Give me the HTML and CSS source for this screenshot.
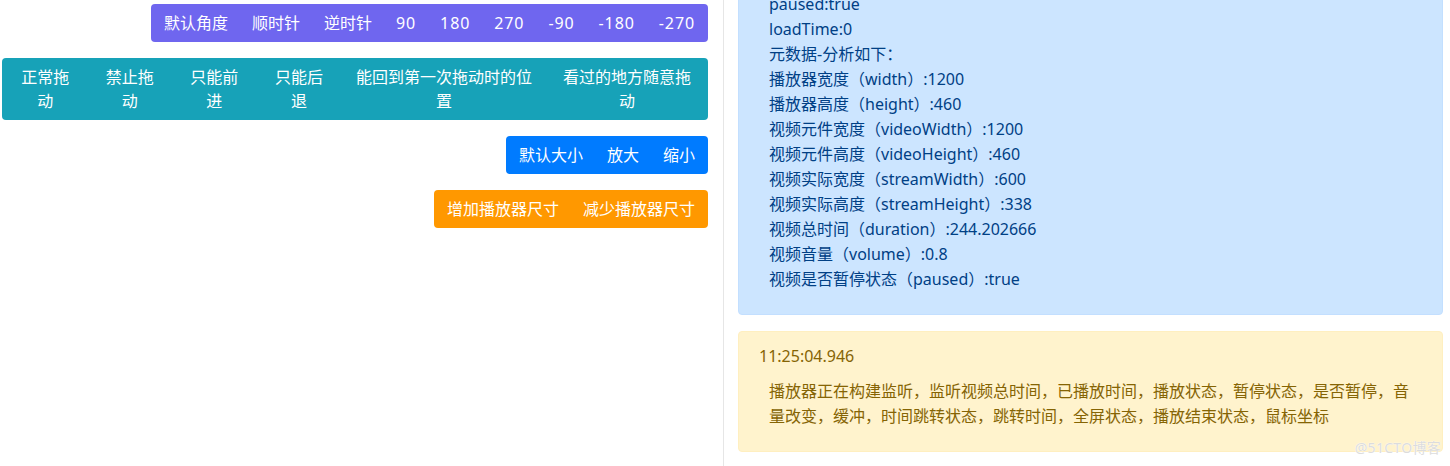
FILE: index.html
```html
<!DOCTYPE html>
<html lang="zh-CN">
<head>
<meta charset="utf-8">
<title>Player</title>
<link rel="stylesheet" href="styles.css">
</head>
<body>
<div class="page">
  <div class="left">
    <div class="btn-group purple">
      <button class="btn">默认角度</button>
      <button class="btn">顺时针</button>
      <button class="btn">逆时针</button>
      <button class="btn num">90</button>
      <button class="btn num">180</button>
      <button class="btn num">270</button>
      <button class="btn num">-90</button>
      <button class="btn num">-180</button>
      <button class="btn num">-270</button>
    </div>
    <div class="btn-group teal">
      <button class="btn">正常拖动</button>
      <button class="btn">禁止拖动</button>
      <button class="btn">只能前进</button>
      <button class="btn">只能后退</button>
      <button class="btn">能回到第一次拖动时的位置</button>
      <button class="btn">看过的地方随意拖动</button>
    </div>
    <div class="btn-group blue">
      <button class="btn">默认大小</button>
      <button class="btn">放大</button>
      <button class="btn">缩小</button>
    </div>
    <div class="btn-group orange">
      <button class="btn">增加播放器尺寸</button>
      <button class="btn">减少播放器尺寸</button>
    </div>
  </div>
  <div class="right">
    <div class="alert alert-info">
      <div class="lines">
        <div>paused:true</div>
        <div>loadTime:0</div>
        <div>元数据-分析如下：</div>
        <div>播放器宽度（width）:1200</div>
        <div>播放器高度（height）:460</div>
        <div>视频元件宽度（videoWidth）:1200</div>
        <div>视频元件高度（videoHeight）:460</div>
        <div>视频实际宽度（streamWidth）:600</div>
        <div>视频实际高度（streamHeight）:338</div>
        <div>视频总时间（duration）:244.202666</div>
        <div>视频音量（volume）:0.8</div>
        <div>视频是否暂停状态（paused）:true</div>
      </div>
    </div>
    <div class="alert alert-warning">
      <div class="time">11:25:04.946</div>
      <p class="lines">播放器正在构建监听，监听视频总时间，已播放时间，播放状态，暂停状态，是否暂停，音量改变，缓冲，时间跳转状态，跳转时间，全屏状态，播放结束状态，鼠标坐标</p>
    </div>
    <div class="watermark">@51CTO博客</div>
  </div>
</div>
</body>
</html>
```
FILE: styles.css
```css
html, body {
  margin: 0;
  padding: 0;
  background: #fff;
  font-family: "Noto Sans", "Noto Sans CJK SC", sans-serif;
  font-size: 16px;
  overflow: hidden;
}

.page {
  display: flex;
  min-height: 100vh;
}

.left {
  box-sizing: border-box;
  width: 724px;
  flex: none;
  padding: 4px 15px 0 2px;
  border-right: 1px solid #e6e6e6;
  display: flex;
  flex-direction: column;
  align-items: flex-end;
  gap: 16px;
}

.btn-group {
  display: inline-flex;
  max-width: 100%;
  border-radius: 4px;
  overflow: hidden;
}

.btn {
  font-family: inherit;
  font-size: 16px;
  line-height: 24px;
  color: #fff;
  background: transparent;
  border: 1px solid transparent;
  border-left-width: 0;
  border-right-width: 0;
  padding: 6px 12px;
  margin: 0;
  text-align: center;
  cursor: pointer;
}
.btn:first-child { border-left-width: 1px; }
.btn:last-child { border-right-width: 1px; }

.btn.num {
  letter-spacing: 0.9px;
}

.purple { background: #6f66ef; }
.teal { background: #17a2b8; }
.blue { background: #007bff; }
.orange { background: #ff9800; }

.right {
  position: relative;
  flex: 1;
  box-sizing: border-box;
  padding: 0 7px 0 14px;
}

.alert {
  border-radius: 4px;
  border: 1px solid transparent;
  padding: 13px 20px 6px;
  margin-bottom: 16px;
}

.alert-info {
  background: #cce5ff;
  border-color: #c3dfff;
  color: #004085;
  margin-top: -9px;
  padding-top: 0;
}

.alert-warning {
  background: #fff3cd;
  border-color: #ffefc0;
  color: #856404;
  padding-top: 12px;
}

.lines {
  line-height: 25px;
  padding: 0 10px;
  margin: 0 0 16px;
}

.time {
  line-height: 25px;
}

.alert-warning .lines {
  margin-top: 10px;
}

.watermark {
  position: absolute;
  right: 9px;
  top: 438px;
  font-size: 14px;
  line-height: 20px;
  letter-spacing: 0.3px;
  color: #dcdcdc;
  text-shadow: 0 0 1px #fff, 0 0 1px #fff;
}
```
